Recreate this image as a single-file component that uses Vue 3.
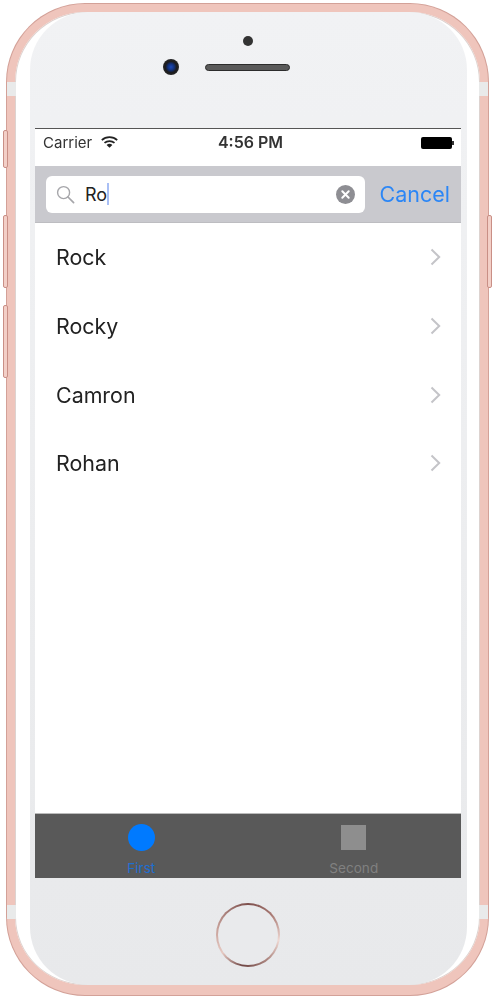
<script setup>
const results = ['Rock', 'Rocky', 'Camron', 'Rohan']
</script>

<template>
  <div class="page">
    <div class="phone">
      <span class="band band-top-left"></span>
      <span class="band band-top-right"></span>
      <span class="band band-bottom-left"></span>
      <span class="band band-bottom-right"></span>
      <span class="side-btn mute"></span>
      <span class="side-btn vol-up"></span>
      <span class="side-btn vol-down"></span>
      <span class="side-btn power"></span>

      <div class="bezel">
        <div class="top-part">
          <span class="earpiece-dot"></span>
          <div class="sensors">
            <span class="camera"></span>
            <span class="speaker"></span>
          </div>
        </div>

        <div class="screen">
          <div class="status-bar">
            <div class="status-left">
              <span>Carrier</span>
              <svg class="wifi" width="17" height="12" viewBox="0 0 17 12">
                <path d="M0.8 4.2C5 0.2 12 0.2 16.2 4.2" fill="none" stroke="#222" stroke-width="1.7" />
                <path d="M3.5 6.9C6.2 4.4 10.8 4.4 13.5 6.9" fill="none" stroke="#222" stroke-width="1.7" />
                <path d="M8.5 11.8L5.6 8.9C7.3 7.4 9.7 7.4 11.4 8.9Z" fill="#222" />
              </svg>
            </div>
            <span class="clock">4:56 PM</span>
            <div class="battery"><span class="battery-fill"></span><span class="battery-tip"></span></div>
          </div>

          <div class="search-bar">
            <div class="search-field">
              <svg class="search-icon" width="19" height="19" viewBox="0 0 19 19">
                <circle cx="7.6" cy="7.6" r="6" fill="none" stroke="#a6a6aa" stroke-width="1.4" />
                <path d="M12 12L17.6 17.6" stroke="#a6a6aa" stroke-width="1.7" stroke-linecap="round" />
              </svg>
              <span class="query">Ro</span>
              <span class="caret"></span>
              <svg class="clear-icon" width="19" height="19" viewBox="0 0 19 19">
                <circle cx="9.5" cy="9.5" r="9.5" fill="#8e8e93" />
                <path d="M6.3 6.3L12.7 12.7M12.7 6.3L6.3 12.7" stroke="#fff" stroke-width="2" stroke-linecap="round" />
              </svg>
            </div>
            <span class="cancel">Cancel</span>
          </div>

          <ul class="results">
            <li v-for="name in results" :key="name" class="row">
              <span>{{ name }}</span>
              <svg width="11" height="18" viewBox="0 0 11 18">
                <path d="M1.5 1.5L9.2 9L1.5 16.5" fill="none" stroke="#c4c4c8" stroke-width="2" />
              </svg>
            </li>
          </ul>

          <div class="tab-bar">
            <div class="tab active">
              <span class="tab-circle"></span>
              <span class="tab-label">First</span>
            </div>
            <div class="tab">
              <span class="tab-square"></span>
              <span class="tab-label">Second</span>
            </div>
          </div>
        </div>

        <div class="bottom-part">
          <span class="home-btn"></span>
        </div>
      </div>
    </div>
  </div>
</template>

<style>
html, body {
  margin: 0;
  background: #fff;
}
</style>

<style scoped>
.page {
  width: 493px;
  height: 998px;
  padding: 4px 5px 3px 7px;
  box-sizing: border-box;
  background: #fff;
  font-family: Inter, "Liberation Sans", sans-serif;
  overflow: hidden;
}

.phone {
  position: relative;
  box-sizing: border-box;
  height: 991px;
  padding: 0 13px 0 15px;
  border: 8px solid #efc5bc;
  border-bottom-width: 10px;
  border-radius: 78px;
  background: #fff;
  box-shadow: inset 0 0 0 1px #ddd3d0, 0 0 0 1px #d3a198;
  filter: blur(0.35px);
}

.band {
  position: absolute;
  width: 9px;
  height: 14px;
  background: #e9eaea;
}
.band-top-left { left: -8px; top: 70px; }
.band-top-right { right: -8px; top: 70px; }
.band-bottom-left { left: -8px; bottom: 66px; }
.band-bottom-right { right: -8px; bottom: 66px; }

.side-btn {
  position: absolute;
  width: 3px;
  border: 1px solid #c98f86;
  border-radius: 2px;
  background: #f3cfc7;
}
.mute { left: -12px; top: 118px; height: 36px; }
.vol-up { left: -12px; top: 203px; height: 71px; }
.vol-down { left: -12px; top: 293px; height: 71px; }
.power { right: -12px; top: 203px; height: 71px; }

.bezel {
  height: 100%;
  box-sizing: border-box;
  display: flex;
  flex-direction: column;
  border-radius: 58px;
  background: linear-gradient(#f1f2f4, #e8e9eb);
  padding: 0 6px 0 5px;
}

.top-part {
  height: 116px;
  flex: none;
  position: relative;
}

.earpiece-dot {
  position: absolute;
  left: 208px;
  top: 24px;
  width: 10px;
  height: 10px;
  border-radius: 50%;
  background: #333;
}

.sensors {
  position: absolute;
  left: 128px;
  top: 47px;
  display: flex;
  align-items: center;
  gap: 26px;
}

.camera {
  width: 16px;
  height: 16px;
  border-radius: 50%;
  background: radial-gradient(circle, #1c49b8 0, #12317c 28%, #1c1c1e 50%, #333 100%);
}

.speaker {
  width: 85px;
  height: 7px;
  box-sizing: border-box;
  border-radius: 4px;
  border: 1px solid #2c2c2c;
  background: #5a5a5a;
}

.screen {
  flex: none;
  height: 750px;
  display: flex;
  flex-direction: column;
  background: #fff;
  border-top: 1px solid #555;
  box-sizing: border-box;
}

.status-bar {
  height: 37px;
  flex: none;
  display: flex;
  align-items: center;
  justify-content: space-between;
  padding: 0 7px 10px 8px;
  box-sizing: border-box;
  font-size: 15px;
  color: #333;
  position: relative;
}

.status-left {
  display: flex;
  align-items: center;
  gap: 9px;
}

.wifi {
  margin-top: -2px;
}

.clock {
  position: absolute;
  left: 5px;
  right: 0;
  top: 3px;
  text-align: center;
  font-size: 16px;
  font-weight: 600;
}

.battery {
  display: flex;
  align-items: center;
}

.battery-fill {
  width: 31px;
  height: 12px;
  border-radius: 2px;
  background: #000;
}

.battery-tip {
  width: 2px;
  height: 4px;
  background: #333;
}

.search-bar {
  height: 57px;
  flex: none;
  display: flex;
  align-items: center;
  padding: 0 11px;
  gap: 14px;
  box-sizing: border-box;
  background: #c9c9ce;
  border-bottom: 1px solid #bdbdc1;
}

.search-field {
  flex: 1;
  height: 37px;
  display: flex;
  align-items: center;
  padding: 0 10px 0 10px;
  border-radius: 6px;
  background: #fff;
}

.query {
  margin-left: 10px;
  font-size: 18px;
  color: #222;
}

.caret {
  width: 2px;
  height: 22px;
  background: #a9bff5;
}

.clear-icon {
  margin-left: auto;
}

.cancel {
  font-size: 21.5px;
  color: #2b86f6;
}

.results {
  flex: 1;
  margin: 0;
  padding: 0;
  list-style: none;
}

.row {
  height: 68.7px;
  display: flex;
  align-items: center;
  justify-content: space-between;
  padding: 0 20px 0 21px;
  box-sizing: border-box;
  font-size: 21.4px;
  color: #222;
}

.tab-bar {
  height: 65px;
  flex: none;
  display: flex;
  padding-right: 1px;
  background: #595959;
  border-top: 1px solid #bbb;
  box-sizing: border-box;
}

.tab {
  flex: 1;
  display: flex;
  flex-direction: column;
  align-items: center;
  padding-top: 10px;
  color: #808080;
}

.tab.active {
  color: #1f6ed0;
}

.tab-circle {
  width: 27px;
  height: 27px;
  border-radius: 50%;
  background: #007aff;
}

.tab-square {
  width: 25px;
  height: 25px;
  margin: 1px 0;
  background: #8e8e8e;
}

.tab-label {
  margin-top: 9px;
  font-size: 13.6px;
  line-height: 17px;
}

.bottom-part {
  flex: 1;
  display: flex;
  justify-content: center;
  padding-top: 25px;
}

.home-btn {
  width: 64px;
  height: 64px;
  box-sizing: border-box;
  border-radius: 50%;
  border: 2.5px solid transparent;
  background:
    linear-gradient(#e9eaec, #e9eaec) padding-box,
    conic-gradient(#7d4f4c 0deg, #a97a74 50deg, #efd8d2 100deg, #b08a84 140deg, #6f4644 190deg, #e6c9c2 235deg, #c9a39c 280deg, #7d4f4c 360deg) border-box;
}
</style>
